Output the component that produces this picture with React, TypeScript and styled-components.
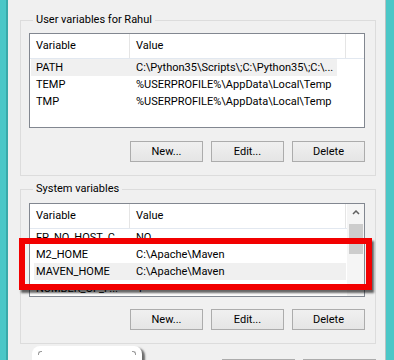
import styled, { createGlobalStyle } from "styled-components";

const GlobalStyle = createGlobalStyle`
  html, body {
    margin: 0;
    padding: 0;
    background: #f0f0f0;
  }
`;

const Screen = styled.div`
  position: relative;
  display: flex;
  width: 394px;
  height: 360px;
  overflow: hidden;
  background: #f0f0f0;
  font-family: Roboto, "Liberation Sans", sans-serif;
  font-size: 11px;
  color: #000;
`;

const Frame = styled.div<{ $side: "left" | "right" }>`
  flex: none;
  width: ${(p) => (p.$side === "left" ? 6 : 8)}px;
  background: #4bc7c7;
  ${(p) =>
    p.$side === "left"
      ? "border-right: 2px solid #3aa9a9;"
      : "border-left: 1px solid #b9c2c2;"}
`;

const Body = styled.div`
  flex: 1;
  min-width: 0;
  display: flex;
  flex-direction: column;
  padding: 12px 9px 0 12px;
`;

const GroupBox = styled.fieldset<{ $top: number; $padTop: number }>`
  margin: ${(p) => p.$top}px 0 0;
  padding: ${(p) => p.$padTop}px 10px 13px 8px;
  border: 1px solid #dcdcdc;
  min-width: 0;
`;

const Legend = styled.legend`
  margin-left: 4px;
  padding: 0 3px;
  height: 16px;
  line-height: 16px;
`;

const ListBox = styled.div<{ $h: number }>`
  display: flex;
  height: ${(p) => p.$h - 2}px;
  border: 1px solid #828790;
  background: #fff;
  overflow: hidden;
`;

const ListMain = styled.div`
  flex: 1;
  min-width: 0;
`;

const HeaderRow = styled.div`
  display: grid;
  grid-template-columns: 100px 216px 1fr;
  height: 24px;
  border-bottom: 1px solid #e2e8f0;
`;

const HeaderCell = styled.div`
  padding-left: 6px;
  line-height: 24px;
  white-space: nowrap;
  overflow: hidden;
  border-right: 1px solid #e5e5e5;
  &:last-child {
    border-right: none;
  }
`;

const Row = styled.div<{ $sel?: boolean; $from: number; $to: number }>`
  display: grid;
  grid-template-columns: 100px 216px;
  height: 17px;
  line-height: 17px;
  background: ${(p) =>
    p.$sel
      ? `linear-gradient(90deg, transparent ${p.$from}px, #f0f0f0 ${p.$from}px, #f0f0f0 ${p.$to}px, transparent ${p.$to}px)`
      : "none"};
`;

const Cell = styled.div`
  padding-left: 6px;
  white-space: nowrap;
  overflow: hidden;
`;

const Scrollbar = styled.div`
  flex: none;
  width: 17px;
  display: flex;
  flex-direction: column;
  background: #f5f5f5;
`;

const ScrollArrow = styled.div`
  height: 17px;
  display: flex;
  align-items: center;
  justify-content: center;
`;

const Thumb = styled.div`
  margin: 3px 1px 0 2px;
  height: 30px;
  background: #cdcdcd;
`;

const ScrollTrack = styled.div`
  flex: 1;
`;

const ButtonRow = styled.div<{ $top: number }>`
  display: flex;
  justify-content: flex-end;
  gap: 8px;
  margin-top: ${(p) => p.$top}px;
`;

const Button = styled.button`
  width: 73px;
  height: 21px;
  padding: 0;
  border: 1px solid #acacac;
  background: linear-gradient(#f0f0f0, #e5e5e5);
  font: inherit;
  color: #000;
`;

const Footer = styled.div`
  display: flex;
  align-items: flex-start;
  margin-top: 2px;
`;

const Bubble = styled.div`
  display: flex;
  justify-content: space-between;
  width: 110px;
  height: 30px;
  margin-left: 12px;
  padding: 5px 6px 0;
  box-sizing: border-box;
  background: #fff;
  border-radius: 8px;
  box-shadow: 3px 2px 2px rgba(0, 0, 0, 0.55);
`;

const Corner = styled.span<{ $side: "left" | "right" }>`
  width: 3px;
  height: 3px;
  border-top: 1px solid #9a9a9a;
  ${(p) =>
    p.$side === "left"
      ? "border-left: 1px solid #9a9a9a; border-top-left-radius: 3px;"
      : "border-right: 1px solid #9a9a9a; border-top-right-radius: 3px;"}
`;

const FooterButtons = styled.div`
  display: flex;
  gap: 8px;
  margin-left: auto;
  padding-top: 13px;
`;

const Highlight = styled.div`
  position: absolute;
  left: 19px;
  top: 238px;
  width: 353px;
  height: 52px;
  box-sizing: border-box;
  border: 6px solid #f20000;
  box-shadow: 2px 3px 2px rgba(0, 0, 0, 0.6);
  pointer-events: none;
`;

type Variable = { name: string; value: string; sel?: boolean };

const userVars: Variable[] = [
  { name: "PATH", value: "C:\\Python35\\Scripts\\;C:\\Python35\\;C:\\...", sel: true },
  { name: "TEMP", value: "%USERPROFILE%\\AppData\\Local\\Temp" },
  { name: "TMP", value: "%USERPROFILE%\\AppData\\Local\\Temp" },
];

const systemVars: Variable[] = [
  { name: "FP_NO_HOST_C...", value: "NO" },
  { name: "M2_HOME", value: "C:\\Apache\\Maven" },
  { name: "MAVEN_HOME", value: "C:\\Apache\\Maven", sel: true },
  { name: "NUMBER_OF_P...", value: "4" },
];

function Chevron({ down }: { down?: boolean }) {
  return (
    <svg width="8" height="5" viewBox="0 0 8 5">
      <polyline
        points={down ? "1,1 4,4 7,1" : "1,4 4,1 7,4"}
        fill="none"
        stroke="#606060"
        strokeWidth="1.5"
      />
    </svg>
  );
}

function VarList({
  vars,
  height,
  scroll,
  selFrom,
  selTo,
}: {
  vars: Variable[];
  height: number;
  scroll?: boolean;
  selFrom: number;
  selTo: number;
}) {
  return (
    <ListBox $h={height}>
      <ListMain>
        <HeaderRow>
          <HeaderCell>Variable</HeaderCell>
          <HeaderCell>Value</HeaderCell>
          <HeaderCell />
        </HeaderRow>
        {vars.map((v) => (
          <Row key={v.name} $sel={v.sel} $from={selFrom} $to={selTo}>
            <Cell>{v.name}</Cell>
            <Cell>{v.value}</Cell>
          </Row>
        ))}
      </ListMain>
      {scroll ? (
        <Scrollbar>
          <ScrollArrow>
            <Chevron />
          </ScrollArrow>
          <Thumb />
          <ScrollTrack />
          <ScrollArrow>
            <Chevron down />
          </ScrollArrow>
        </Scrollbar>
      ) : null}
    </ListBox>
  );
}

export default function App() {
  return (
    <>
      <GlobalStyle />
      <Screen>
        <Frame $side="left" />
        <Body>
          <GroupBox $top={0} $padTop={5}>
            <Legend>User variables for Rahul</Legend>
            <VarList vars={userVars} height={95} selFrom={1} selTo={307} />
            <ButtonRow $top={13}>
              <Button>New...</Button>
              <Button>Edit...</Button>
              <Button>Delete</Button>
            </ButtonRow>
          </GroupBox>
          <GroupBox $top={5} $padTop={6}>
            <Legend>System variables</Legend>
            <VarList vars={systemVars} height={94} scroll selFrom={4} selTo={316} />
            <ButtonRow $top={12}>
              <Button>New...</Button>
              <Button>Edit...</Button>
              <Button>Delete</Button>
            </ButtonRow>
          </GroupBox>
          <Footer>
            <Bubble>
              <Corner $side="left" />
              <Corner $side="right" />
            </Bubble>
            {/* OK / Cancel sit below the visible edge; only their top border shows */}
            <FooterButtons>
              <Button aria-label="OK" />
              <Button aria-label="Cancel" />
            </FooterButtons>
          </Footer>
        </Body>
        <Frame $side="right" />
        <Highlight />
      </Screen>
    </>
  );
}
